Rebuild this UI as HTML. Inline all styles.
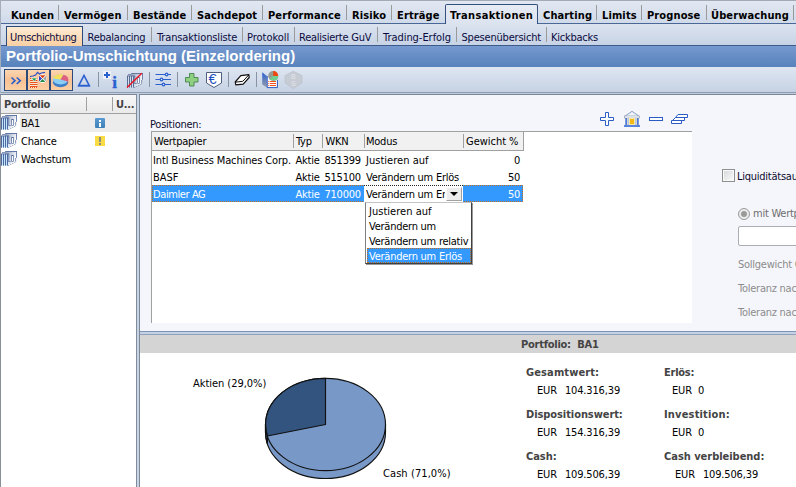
<!DOCTYPE html>
<html><head><meta charset="utf-8"><title>Portfolio-Umschichtung</title>
<style>
html,body{margin:0;padding:0}
body{width:796px;height:487px;overflow:hidden;position:relative;background:#fff;font-family:"DejaVu Sans Condensed","Liberation Sans",sans-serif;font-size:11px;color:#000;letter-spacing:-0.25px}
.a{position:absolute;white-space:pre;line-height:14px;height:14px}
.b{font-weight:bold}
#tabs1{position:absolute;left:0;top:0;width:796px;height:24px;background:linear-gradient(#e2e8f2,#cfd9e8);border-top:1px solid #a3aab5;box-sizing:border-box}
#tabs1 .ln{position:absolute;left:0;top:22px;width:796px;height:1px;background:#4a6897}
#tabs1 .sep,#tabs2 .sep{position:absolute;width:1px;background:#9a9a9a}
#tabs1 .sep{top:4px;height:15px}
#tabs1 .t{top:8px;color:#000;letter-spacing:.12px;margin-left:0}
#act1{position:absolute;left:445px;top:3px;width:93px;height:21px;box-sizing:border-box;border:1px solid #34507f;border-bottom:none;border-radius:2px 2px 0 0;background:linear-gradient(#e6ebf4,#dbe3ef)}
#tabs2{position:absolute;left:0;top:24px;width:796px;height:22px;background:linear-gradient(#dbe3ef,#c7d3e5);border-bottom:1px solid #3c5a8a;box-sizing:border-box}
#tabs2 .sep{top:3px;height:15px}
#tabs2 .t{top:7px;color:#0a0a40}
#act2{position:absolute;left:6px;top:2px;width:77px;height:20px;box-sizing:border-box;border:1px solid #2b4a7a;border-bottom:none;background:linear-gradient(#fdebd4,#fbcfa3)}
#title{position:absolute;left:0;top:46px;width:796px;height:21px;background:linear-gradient(#7699cf,#5782bb)}
#title span{position:absolute;left:6px;top:1px;font-family:"Liberation Sans",sans-serif;font-weight:bold;font-size:15px;color:#fff;letter-spacing:0;line-height:18px;white-space:pre}
#tb{position:absolute;left:0;top:67px;width:796px;height:26px;background:linear-gradient(#dee6f1,#c6d2e4);box-sizing:border-box;border-bottom:1px solid #8f9db3}
#gap{position:absolute;left:0;top:93px;width:796px;height:2px;background:#c3cedd;border-bottom:1px solid #7a8798;box-sizing:border-box}
#tb .btn{position:absolute;top:2px;width:23px;height:22px;box-sizing:border-box;border:1px solid #2b4a7a;background:linear-gradient(#fbd6b1,#f8c194 50%,#fbcfa4)}
#tb .sep{position:absolute;top:5px;height:15px;width:1px;background:#8a93a3}
#tb svg{position:absolute}
#left{position:absolute;left:0;top:95px;width:136px;height:392px;background:#fff}
#lh{position:absolute;left:0;top:0;width:136px;height:18px;background:linear-gradient(#f7f7f7,#eaeaea);border-bottom:1px solid #a0a0a0}
#lh i{position:absolute;top:2px;width:1px;height:14px;background:#a0a0a0}
#split{position:absolute;left:136px;top:94px;width:4px;height:393px;background:#c8d3e3;border-left:1px solid #7f8c9e;border-right:1px solid #7a8798;box-sizing:border-box}
#main{position:absolute;left:140px;top:95px;width:656px;height:236px;background:#f5f6fb}
#tblbox{position:absolute;left:11px;top:36px;width:541px;height:192px;background:#fff;border-left:1px solid #a0a0a0;border-top:1px solid #a0a0a0;box-sizing:border-box}
#th{position:absolute;left:0;top:0;width:371px;height:18px;background:#f1f1f1;border-bottom:1px solid #a0a0a0;border-right:1px solid #a0a0a0}
#th i{position:absolute;top:2px;height:14px;width:1px;background:#a0a0a0}
#sel{position:absolute;left:0;top:53px;width:371px;height:17px;background:#3399ff;outline:1px dotted #c66a1c;outline-offset:-1px}
#combo{position:absolute;left:212px;top:53px;width:99px;height:17px;background:#fff;border-top:1px dotted #222;box-sizing:border-box}
#cbtn{position:absolute;left:294px;top:55px;width:16px;height:14px;box-sizing:border-box;background:#ececec;border:1px solid #fff;border-right-color:#a0a0a0;border-bottom-color:#a0a0a0}
#list{position:absolute;left:365px;top:202px;width:107px;height:62px;box-sizing:border-box;background:#fff;border:1px solid #808080;border-top-color:#c4c4c4;border-right-color:#404040;border-bottom-color:#404040;box-shadow:1px 1px 0 #9a9a9a}
#lsel{position:absolute;left:1px;top:45px;width:104px;height:15px;background:#3399ff;outline:1px dotted #c66a1c;outline-offset:-1px}
#hsplit{position:absolute;left:140px;top:331px;width:656px;height:4px;background:#c5d2e6;border-top:1px solid #7f93b5;border-bottom:1px solid #8fa0bd;box-sizing:border-box}
#low{position:absolute;left:140px;top:335px;width:656px;height:152px;background:#fff}
#lowh{position:absolute;left:0;top:0;width:656px;height:18px;background:#d4d4d4}
.g{color:#444}
.w{color:#fff}
.n{color:#0c0c30}
.v{word-spacing:1px;letter-spacing:-0.15px}
.r{right:172px;text-align:right}
.dis{color:#8c8c8c}
</style></head><body>
<div id="tabs1"><div class="ln"></div>
<div id="act1"></div>
<span class="a b t" style="left:11px">Kunden</span><div class="sep" style="left:58px"></div>
<span class="a b t" style="left:64px">Vermögen</span><div class="sep" style="left:127px"></div>
<span class="a b t" style="left:133px">Bestände</span><div class="sep" style="left:191px"></div>
<span class="a b t" style="left:197px">Sachdepot</span><div class="sep" style="left:262px"></div>
<span class="a b t" style="left:268px">Performance</span><div class="sep" style="left:346px"></div>
<span class="a b t" style="left:352px">Risiko</span><div class="sep" style="left:391px"></div>
<span class="a b t" style="left:397px">Erträge</span>
<span class="a b t" style="left:450px;letter-spacing:.32px">Transaktionen</span>
<span class="a b t" style="left:543px">Charting</span><div class="sep" style="left:596px"></div>
<span class="a b t" style="left:602px">Limits</span><div class="sep" style="left:641px"></div>
<span class="a b t" style="left:647px">Prognose</span><div class="sep" style="left:706px"></div>
<span class="a b t" style="left:711px">Überwachung</span><div class="sep" style="left:793px"></div>
</div>
<div id="tabs2"><div id="act2"></div>
<span class="a t" style="left:10px;letter-spacing:-.37px">Umschichtung</span>
<span class="a t" style="left:87.5px">Rebalancing</span><div class="sep" style="left:151px"></div>
<span class="a t" style="left:157px;letter-spacing:-.13px">Transaktionsliste</span><div class="sep" style="left:242px"></div>
<span class="a t" style="left:247px;letter-spacing:-.02px">Protokoll</span><div class="sep" style="left:294px"></div>
<span class="a t" style="left:299px">Realisierte GuV</span><div class="sep" style="left:377px"></div>
<span class="a t" style="left:383px;letter-spacing:-.04px">Trading-Erfolg</span><div class="sep" style="left:456px"></div>
<span class="a t" style="left:461.5px;letter-spacing:-.2px">Spesenübersicht</span><div class="sep" style="left:546px"></div>
<span class="a t" style="left:551px">Kickbacks</span>
</div>
<div id="title"><span>Portfolio-Umschichtung (Einzelordering)</span></div>
<div id="tb">
<div class="btn" style="left:4px"></div><div class="btn" style="left:27px"></div><div class="btn" style="left:50px"></div>
<svg width="320" height="27" viewBox="0 0 320 27" style="left:0;top:0">
<g fill="none" stroke="#2a5fd0" stroke-width="1.6"><path d="M11.5,10.5 L15,13.7 L11.5,17"/><path d="M16.7,10.5 L20.3,13.7 L16.7,17"/></g>
<g><rect x="30" y="11" width="7.5" height="10" fill="#fff" fill-opacity=".55"/>
<g fill="#e8501c"><rect x="30" y="11" width="7.5" height="1"/><rect x="30" y="13" width="7.5" height="1"/><rect x="30" y="15" width="7.5" height="1"/><rect x="30" y="17" width="7.5" height="1"/><rect x="30" y="19" width="7.5" height="1"/><rect x="30" y="20" width="1" height="1"/><rect x="32" y="20" width="1" height="1"/><rect x="34" y="20" width="1" height="1"/><rect x="36" y="20" width="1" height="1"/></g>
<path d="M30,9.5 L33,9 L35.5,8 L37.5,5.3 L39.5,7 L41.5,6 L45,5.3" fill="none" stroke="#2a50c8" stroke-width="1.2"/>
<path d="M31.3,11 L37.2,11 L34.2,14.5 Z" fill="#1fa050" stroke="#fff" stroke-width=".6"/>
<circle cx="42.6" cy="11.6" r="4.3" fill="#fff"/>
<path d="M39.8,8.2 L45.4,8.2 L42.6,11.2 Z" fill="#e04010"/><path d="M39.8,15 L45.4,15 L42.6,12 Z" fill="#208a48"/><path d="M39,8.8 L39,14.4 L42.1,11.6 Z" fill="#3040c0"/><path d="M46.3,8.8 L46.3,14.4 L43.1,11.6 Z" fill="#a0a4a0"/></g>
<g><ellipse cx="60.5" cy="15.2" rx="7.6" ry="5" fill="#3d7fc8"/><ellipse cx="60.5" cy="12.4" rx="7.6" ry="5" fill="#8ccdf5"/>
<path d="M60.5,12.4 L53,11.5 A7.6,5 0 0 1 63.5,7.7 Z" fill="#f4e05c"/><path d="M60.5,12.4 L63.5,7.7 A7.6,5 0 0 1 67.6,14.5 Z" fill="#e0607f"/><path d="M67.6,14.5 A7.6,5 0 0 0 68.1,12.4 L68.1,15.2 A7.6,5 0 0 1 67.4,17.3 Z" fill="#b8405c"/></g>
<path d="M78.7,18.6 L84,8.4 L89.3,18.6 Z" fill="none" stroke="#2a5fd0" stroke-width="1.6"/><rect x="78" y="18" width="12" height="1.4" fill="#2a5fd0"/>
<rect x="103" y="4" width="8" height="8" fill="#eef2f8"/><path d="M107,5 V11 M104,8 H110" stroke="#2a5fd0" stroke-width="2" fill="none"/>
<text x="112.2" y="20.8" font-family="Liberation Serif,serif" font-weight="bold" font-size="17" fill="#2a5fd0" stroke="#2a5fd0" stroke-width=".4" letter-spacing="0">i</text>
<defs><linearGradient id="pg1" x1="0" y1="0" x2="1" y2=".5"><stop offset="0" stop-color="#8b9cb8"/><stop offset=".95" stop-color="#fff"/></linearGradient><linearGradient id="pg2" x1="0" y1="0" x2="1" y2=".5"><stop offset="0" stop-color="#97a5bd"/><stop offset=".95" stop-color="#f4f6fa"/></linearGradient></defs><g transform="translate(127,6)"><path d="M4.2,1 H15.2 V6.6 L14.4,7.2 V10.6 L7.5,14 V3 H4.2 Z" fill="url(#pg2)"/>
<rect x="0" y="3" width="7.4" height="11.6" fill="#d4deec"/>
<g fill="#586b93"><rect x="0" y="3" width="1" height="11.6"/><rect x="2" y="3" width="1" height="11.6"/><rect x="4" y="3" width="1" height="11.6"/><rect x="6" y="3" width="1" height="11.6"/>
<rect x="0" y="2.5" width="8" height=".9"/><rect x="1" y="1.3" width="3.4" height=".8"/><rect x="4.2" y="0" width="11.8" height=".9"/><rect x="15.2" y="0.2" width=".8" height="6.6"/>
<rect x="7.4" y="3" width=".8" height="7.6"/><rect x="7.5" y="10" width="2.3" height=".7"/><rect x="14.4" y="7" width=".7" height="3.7"/>
<rect x="7.4" y="14" width=".8" height=".8"/><rect x="9.4" y="13" width=".8" height=".8"/><rect x="11.4" y="12" width=".8" height=".8"/><rect x="13.4" y="11" width=".8" height=".8"/></g>
<rect x="10.65" y="4.55" width="1.9" height="6" fill="#fff" stroke="#586b93" stroke-width=".7"/></g><path d="M127,20.6 L141.8,6.2" stroke="#f01020" stroke-width="1.4"/>
<g stroke="#2a5fd0" stroke-width="1.2" fill="#dfe7f3"><path d="M155.5,7.5 H171 M155.5,12.5 H171 M155.5,17.5 H171"/><circle cx="166.6" cy="7.5" r="1.3"/><circle cx="161.5" cy="12.5" r="1.3"/><circle cx="163.5" cy="17.5" r="1.3"/></g>
<path d="M189.5,6.5 H194 V10.5 H198 V15 H194 V19 H189.5 V15 H185.5 V10.5 H189.5 Z" fill="#8fcf80" stroke="#4f8a58" stroke-width="1"/>
<path d="M206.5,5.5 H221.5 V16 L214,20.5 L206.5,16 Z" fill="#fff" stroke="#4f5f80" stroke-width="1"/>
<text x="208.6" y="17.3" font-family="Liberation Sans,sans-serif" font-size="14.5" fill="#2050c0" letter-spacing="0">€</text>
<path d="M235.2,15 L240.8,8.6 L248.8,7.6 L249.2,10.5 L243.2,17.2 L235.8,17.9 Z" fill="#fff" stroke="#101010" stroke-width="1.2" stroke-linejoin="round"/><path d="M235.4,15.2 L242.8,14.3 L248.8,7.9" fill="none" stroke="#101010" stroke-width="1" stroke-linejoin="round"/>
<g><defs><linearGradient id="fl" x1="0" y1="0" x2="0" y2="1"><stop offset="0" stop-color="#2a60d0"/><stop offset="1" stop-color="#98a0a8"/></linearGradient></defs><path d="M262.2,5.2 L266.8,9 L266.8,20.6 L262.2,17.6 Z" fill="url(#fl)"/><path d="M267.5,10 H277 V20.5 H267.5 Z" fill="#fff"/><path d="M267.2,9 V20.6 H277.4 V13" fill="none" stroke="#2a58c0" stroke-width="1"/><circle cx="273.2" cy="9" r="5" fill="#949c94"/><path d="M273.2,9 L273.2,4 A5,5 0 0 1 278.2,9 Z" fill="#f04810"/><path d="M273.2,9 L278.2,9 A5,5 0 0 1 275,13.7 L269.5,12.4 Z" fill="#70d090"/><g fill="#f05020"><rect x="270" y="14" width="6" height="1"/><rect x="270" y="16" width="6" height="1"/><rect x="270" y="18" width="6" height="1"/><rect x="268.3" y="14" width="1" height="1"/><rect x="268.3" y="16" width="1" height="1"/><rect x="268.3" y="18" width="1" height="1"/></g></g>
<path d="M293.4,4.3 L301.9,8.6 V16 L293.4,21.6 L285.1,16 V8.6 Z" fill="#c6cbd4" stroke="#bcc2cd" stroke-width=".8"/>
<text x="290.9" y="12.3" font-family="Liberation Sans,sans-serif" font-size="7" fill="#e2e5eb" letter-spacing="0">B</text><text x="290.9" y="19.3" font-family="Liberation Sans,sans-serif" font-size="7" fill="#e2e5eb" letter-spacing="0">S</text>
</svg>
<div class="sep" style="left:98px"></div><div class="sep" style="left:149px"></div><div class="sep" style="left:177px"></div><div class="sep" style="left:228px"></div><div class="sep" style="left:256px"></div>
</div>
<div id="gap"></div>
<div style="position:absolute;left:0;top:0;width:1px;height:67px;background:#a6aebb"></div><div style="position:absolute;left:0;top:67px;width:1px;height:26px;background:#a6b5ce"></div>
<div id="left"><div id="lh"><i style="left:86px"></i><i style="left:112px"></i><span class="a b g" style="left:4px;top:3px">Portfolio</span><span class="a b g" style="left:116px;top:3px">U...</span></div>
<div style="position:absolute;left:20px;top:19px;width:116px;height:18px;background:#ececec"></div>
<svg width="18" height="17" viewBox="0 0 18 17" style="position:absolute;left:0;top:19px"><g transform="translate(1,1)"><path d="M4.2,1 H15.2 V6.6 L14.4,7.2 V10.6 L7.5,14 V3 H4.2 Z" fill="url(#pg1)"/>
<rect x="0" y="3" width="7.4" height="11.6" fill="#c4e6fc"/>
<g fill="#5068a0"><rect x="0" y="3" width="1" height="11.6"/><rect x="2" y="3" width="1" height="11.6"/><rect x="4" y="3" width="1" height="11.6"/><rect x="6" y="3" width="1" height="11.6"/>
<rect x="0" y="2.5" width="8" height=".9"/><rect x="1" y="1.3" width="3.4" height=".8"/><rect x="4.2" y="0" width="11.8" height=".9"/><rect x="15.2" y="0.2" width=".8" height="6.6"/>
<rect x="7.4" y="3" width=".8" height="7.6"/><rect x="7.5" y="10" width="2.3" height=".7"/><rect x="14.4" y="7" width=".7" height="3.7"/>
<rect x="7.4" y="14" width=".8" height=".8"/><rect x="9.4" y="13" width=".8" height=".8"/><rect x="11.4" y="12" width=".8" height=".8"/><rect x="13.4" y="11" width=".8" height=".8"/></g>
<rect x="10.65" y="4.55" width="1.9" height="6" fill="#fff" stroke="#5068a0" stroke-width=".7"/></g></svg><svg width="18" height="17" viewBox="0 0 18 17" style="position:absolute;left:0;top:37px"><g transform="translate(1,1)"><path d="M4.2,1 H15.2 V6.6 L14.4,7.2 V10.6 L7.5,14 V3 H4.2 Z" fill="url(#pg1)"/>
<rect x="0" y="3" width="7.4" height="11.6" fill="#c4e6fc"/>
<g fill="#5068a0"><rect x="0" y="3" width="1" height="11.6"/><rect x="2" y="3" width="1" height="11.6"/><rect x="4" y="3" width="1" height="11.6"/><rect x="6" y="3" width="1" height="11.6"/>
<rect x="0" y="2.5" width="8" height=".9"/><rect x="1" y="1.3" width="3.4" height=".8"/><rect x="4.2" y="0" width="11.8" height=".9"/><rect x="15.2" y="0.2" width=".8" height="6.6"/>
<rect x="7.4" y="3" width=".8" height="7.6"/><rect x="7.5" y="10" width="2.3" height=".7"/><rect x="14.4" y="7" width=".7" height="3.7"/>
<rect x="7.4" y="14" width=".8" height=".8"/><rect x="9.4" y="13" width=".8" height=".8"/><rect x="11.4" y="12" width=".8" height=".8"/><rect x="13.4" y="11" width=".8" height=".8"/></g>
<rect x="10.65" y="4.55" width="1.9" height="6" fill="#fff" stroke="#5068a0" stroke-width=".7"/></g></svg><svg width="18" height="17" viewBox="0 0 18 17" style="position:absolute;left:0;top:55px"><g transform="translate(1,1)"><path d="M4.2,1 H15.2 V6.6 L14.4,7.2 V10.6 L7.5,14 V3 H4.2 Z" fill="url(#pg1)"/>
<rect x="0" y="3" width="7.4" height="11.6" fill="#c4e6fc"/>
<g fill="#5068a0"><rect x="0" y="3" width="1" height="11.6"/><rect x="2" y="3" width="1" height="11.6"/><rect x="4" y="3" width="1" height="11.6"/><rect x="6" y="3" width="1" height="11.6"/>
<rect x="0" y="2.5" width="8" height=".9"/><rect x="1" y="1.3" width="3.4" height=".8"/><rect x="4.2" y="0" width="11.8" height=".9"/><rect x="15.2" y="0.2" width=".8" height="6.6"/>
<rect x="7.4" y="3" width=".8" height="7.6"/><rect x="7.5" y="10" width="2.3" height=".7"/><rect x="14.4" y="7" width=".7" height="3.7"/>
<rect x="7.4" y="14" width=".8" height=".8"/><rect x="9.4" y="13" width=".8" height=".8"/><rect x="11.4" y="12" width=".8" height=".8"/><rect x="13.4" y="11" width=".8" height=".8"/></g>
<rect x="10.65" y="4.55" width="1.9" height="6" fill="#fff" stroke="#5068a0" stroke-width=".7"/></g></svg>
<span class="a" style="left:21px;top:22px">BA1</span><span class="a" style="left:21px;top:40px">Chance</span><span class="a" style="left:21px;top:58px">Wachstum</span>
<div style="position:absolute;left:95px;top:23px;width:10px;height:10px;background:linear-gradient(#5a9bd4,#3f7fb8);border-radius:1px"><b style="position:absolute;left:4px;top:2px;width:2px;height:2px;background:#fff"></b><b style="position:absolute;left:4px;top:5px;width:2px;height:4px;background:#fff"></b></div>
<div style="position:absolute;left:95px;top:41px;width:10px;height:10px;background:#f9dc45"><b style="position:absolute;left:4px;top:1px;width:2px;height:5px;background:#8c8c80"></b><b style="position:absolute;left:4px;top:7px;width:2px;height:2px;background:#8c8c80"></b></div>
<div style="position:absolute;left:0;top:-1px;width:1px;height:393px;background:#8a8f98"></div>
</div>
<div id="split"></div>
<div id="main">
<span class="a n" style="left:10px;top:23px">Positionen:</span>
<svg width="100" height="20" viewBox="596 108 100 20" style="position:absolute;left:456px;top:13px">
<path d="M605.5,112.5 H608.5 V117.5 H613.5 V120.5 H608.5 V125.5 H605.5 V120.5 H600.5 V117.5 H605.5 Z" fill="#fff" stroke="#2a5cc4" stroke-width="1"/>
<g><path d="M624.5,116.5 L632,111.3 L639.5,116.5 Z" fill="#eef2f8" stroke="#8a9fc8" stroke-width="1"/><rect x="624.5" y="116" width="15" height="2" fill="#fff" stroke="#8a94a8" stroke-width=".6"/><rect x="626" y="118" width="12" height="7" fill="#fbe9a8"/><rect x="625.3" y="118" width="1.7" height="7.2" fill="#4a78d8"/><rect x="637" y="118" width="1.7" height="7.2" fill="#4a78d8"/><rect x="627.5" y="118" width="1.5" height="7.2" fill="#b4c6ea"/><rect x="635" y="118" width="1.5" height="7.2" fill="#b4c6ea"/><rect x="630" y="119" width="4" height="5" fill="#f4b818"/><rect x="624" y="125.1" width="16" height="1.8" fill="#4a78d8"/></g>
<rect x="649.5" y="117.5" width="13" height="3" fill="#fff" stroke="#2a5cc4" stroke-width="1"/>
<g fill="#fff" stroke="#2a5cc4" stroke-width="1"><path d="M678,114.5 H687.5 V117.5 H675.5 Z"/><path d="M675.5,117.5 H684.5 V120.5 H672.5 Z"/><path d="M671.5,120.5 H681.5 V123.5 H671.5 Z"/></g>
</svg>
<div style="position:absolute;left:582px;top:74px;width:13px;height:13px;box-sizing:border-box;border:1px solid #8e8f8f;background:#f4f4f4"><b style="position:absolute;left:1px;top:1px;width:9px;height:9px;background:linear-gradient(135deg,#d8dadc,#f8f8f8);box-shadow:0 0 0 1px #fafafa"></b></div>
<span class="a n" style="left:597px;top:75px">Liquiditätsausgleich</span>
<div style="position:absolute;left:598px;top:113px;width:12px;height:12px;box-sizing:border-box;border:1px solid #9a9a9a;border-radius:6px;background:#ececec"><b style="position:absolute;left:2px;top:2px;width:6px;height:6px;border-radius:3px;background:#9a9a9a"></b></div>
<span class="a dis" style="left:613px;top:112px;color:#6d6d6d">mit Wertpapier</span>
<div style="position:absolute;left:598px;top:131px;width:80px;height:20px;box-sizing:border-box;border:1px solid #abadb3;border-radius:2px;background:#fff"></div>
<span class="a dis" style="left:598px;top:163px">Sollgewicht Cash</span><span class="a dis" style="left:598px;top:187px">Toleranz nach oben</span><span class="a dis" style="left:598px;top:211px">Toleranz nach unten</span>
<div id="tblbox"><div id="th"><i style="left:141px"></i><i style="left:170px"></i><i style="left:212px"></i><i style="left:311px"></i></div>
<div id="sel"></div><div id="combo"></div><div id="cbtn"><b style="position:absolute;left:3px;top:4px;width:0;height:0;border:4px solid transparent;border-top-color:#000;border-bottom:none"></b></div>
<span class="a h" style="left:2px;top:3px">Wertpapier</span><span class="a h" style="left:144px;top:3px">Typ</span><span class="a h" style="left:173.5px;top:3px">WKN</span><span class="a h" style="left:214px;top:3px">Modus</span><span class="a h" style="left:314px;top:3px;letter-spacing:-.03px">Gewicht %</span>
<span class="a" style="left:1px;top:22px;letter-spacing:-.14px">Intl Business Machines Corp.</span><span class="a" style="left:143.5px;top:22px">Aktie</span><span class="a" style="left:172.5px;top:22px">851399</span><span class="a" style="left:214px;top:22px;letter-spacing:.03px">Justieren auf</span><span class="a r" style="top:22px">0</span>
<span class="a" style="left:1px;top:39px;letter-spacing:0">BASF</span><span class="a" style="left:143.5px;top:39px">Aktie</span><span class="a" style="left:172.5px;top:39px">515100</span><span class="a" style="left:214px;top:39px">Verändern um Erlös</span><span class="a r" style="top:39px">50</span>
<span class="a w" style="left:1px;top:56px;letter-spacing:-.4px">Daimler AG</span><span class="a w" style="left:143.5px;top:56px">Aktie</span><span class="a w" style="left:172.5px;top:56px">710000</span><span class="a" style="left:214px;top:56px;width:79px;overflow:hidden">Verändern um Erlös</span><span class="a r w" style="top:56px">50</span>
</div>
</div>
<div id="list"><div id="lsel"></div><span class="a" style="left:3px;top:2px;letter-spacing:.03px">Justieren auf</span><span class="a" style="left:3px;top:17px">Verändern um</span><span class="a" style="left:3px;top:32px">Verändern um relativ</span><span class="a w" style="left:3px;top:47px">Verändern um Erlös</span></div>
<div id="hsplit"></div>
<div id="low"><div id="lowh"><span class="a b g" style="left:381px;top:3px">Portfolio:  BA1</span></div>
<svg width="140" height="110" viewBox="260 372 140 110" style="position:absolute;left:120px;top:37px">
<path d="M265.5,424.5 V432.3 A60,46.2 0 0 0 385.5,432.3 V424.5 Z" fill="#7898c8" stroke="#111" stroke-width="1.15"/>
<ellipse cx="325.5" cy="424.5" rx="60" ry="46.2" fill="#7898c8" stroke="#111" stroke-width="1.15"/>
<path d="M325.5,424.5 L325.5,378.3 A60,46.2 0 0 0 267.4,436 Z" fill="#33547e" stroke="#111" stroke-width="1.15" stroke-linejoin="round"/>
<path d="M265.5,424.5 V432.3 A60,46.2 0 0 0 267.4,443.8 V436 A60,46.2 0 0 1 265.5,424.5 Z" fill="#33547e" stroke="#111" stroke-width="1.15"/>
</svg>
<span class="a" style="left:53px;top:42px;letter-spacing:-0.04px">Aktien (29,0%)</span><span class="a" style="left:243px;top:132px;letter-spacing:0.08px">Cash (71,0%)</span>
<span class="a b g" style="left:386px;top:31px;letter-spacing:0.12px">Gesamtwert:</span><span class="a v" style="left:397px;top:49px">EUR  104.316,39</span>
<span class="a b g" style="left:386px;top:73px;letter-spacing:-0.07px">Dispositionswert:</span><span class="a v" style="left:397px;top:91px">EUR  154.316,39</span>
<span class="a b g" style="left:386px;top:115px;letter-spacing:-0.05px">Cash:</span><span class="a v" style="left:397px;top:133px">EUR  109.506,39</span>
<span class="a b g" style="left:524px;top:31px">Erlös:</span><span class="a v" style="left:532px;top:49px;letter-spacing:-0.15px;word-spacing:0">EUR  0</span>
<span class="a b g" style="left:524px;top:73px;letter-spacing:0.17px">Investition:</span><span class="a v" style="left:532px;top:91px;letter-spacing:-0.15px;word-spacing:0">EUR  0</span>
<span class="a b g" style="left:524px;top:115px;letter-spacing:-0.03px">Cash verbleibend:</span><span class="a v" style="left:535px;top:133px">EUR  109.506,39</span>
</div>
</body></html>
